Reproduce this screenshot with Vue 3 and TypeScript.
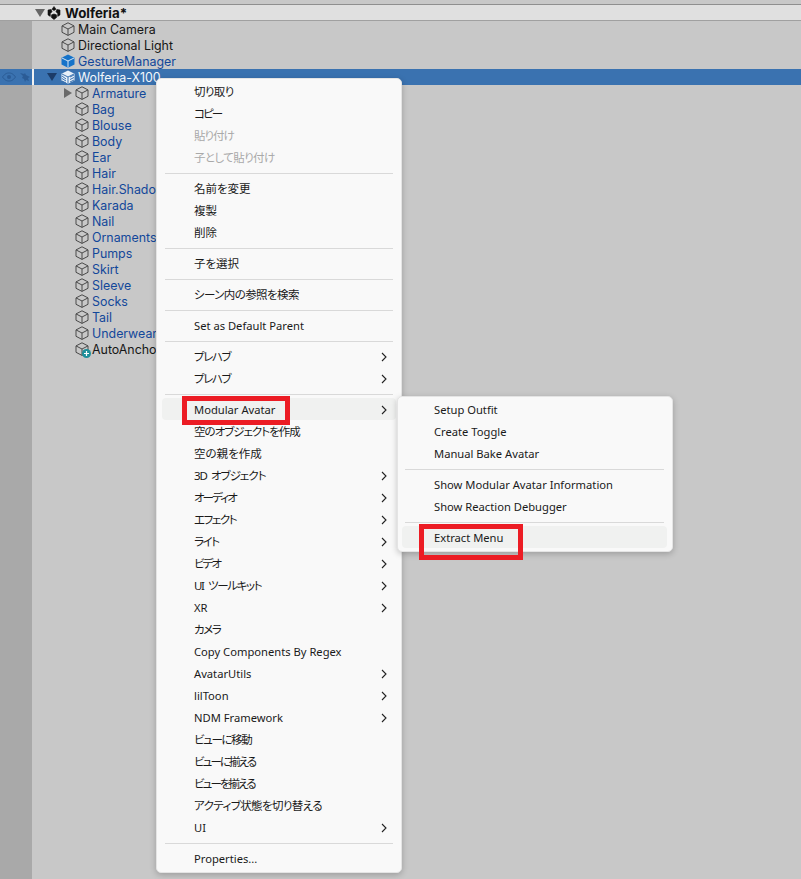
<script setup lang="ts">
interface Row { name: string; depth: number; kind: 'plain' | 'prefab' | 'anchor'; arrow?: 'right' }
interface Item { label?: string; sub?: boolean; off?: boolean; hover?: boolean; sep?: boolean; t?: number }

const topRows: Row[] = [
  { name: 'Main Camera', depth: 0, kind: 'plain' },
  { name: 'Directional Light', depth: 0, kind: 'plain' },
]
const children: Row[] = [
  { name: 'Armature', depth: 1, kind: 'prefab', arrow: 'right' },
  ...['Bag', 'Blouse', 'Body', 'Ear', 'Hair', 'Hair.Shadow', 'Karada', 'Nail', 'Ornaments', 'Pumps', 'Skirt', 'Sleeve', 'Socks', 'Tail', 'Underwear'].map(
    (name): Row => ({ name, depth: 1, kind: 'prefab' }),
  ),
  { name: 'AutoAnchor', depth: 1, kind: 'anchor' },
]

const menu: Item[] = [
  { label: '切り取り', t: 1 }, { label: 'コピー', t: 4 }, { label: '貼り付け', off: true, t: 2 }, { label: '子として貼り付け', off: true, t: 1 },
  { sep: true },
  { label: '名前を変更' }, { label: '複製' }, { label: '削除' },
  { sep: true },
  { label: '子を選択' },
  { sep: true },
  { label: 'シーン内の参照を検索', t: 1 },
  { sep: true },
  { label: 'Set as Default Parent' },
  { sep: true },
  { label: 'プレハブ', sub: true, t: 3 }, { label: 'プレハブ', sub: true, t: 3 },
  { sep: true },
  { label: 'Modular Avatar', sub: true, hover: true },
  { label: '空のオブジェクトを作成', t: 2 }, { label: '空の親を作成' },
  { label: '3D オブジェクト', sub: true, t: 2 }, { label: 'オーディオ', sub: true, t: 4 }, { label: 'エフェクト', sub: true, t: 3 },
  { label: 'ライト', sub: true, t: 3 }, { label: 'ビデオ', sub: true, t: 4 }, { label: 'UI ツールキット', sub: true, t: 3 }, { label: 'XR', sub: true },
  { label: 'カメラ', t: 3 }, { label: 'Copy Components By Regex' },
  { label: 'AvatarUtils', sub: true }, { label: 'lilToon', sub: true }, { label: 'NDM Framework', sub: true },
  { label: 'ビューに移動', t: 3 }, { label: 'ビューに揃える', t: 4 }, { label: 'ビューを揃える', t: 4 }, { label: 'アクティブ状態を切り替える', t: 1 },
  { label: 'UI', sub: true },
  { sep: true },
  { label: 'Properties...' },
]
const submenu: Item[] = [
  { label: 'Setup Outfit' }, { label: 'Create Toggle' }, { label: 'Manual Bake Avatar' },
  { sep: true },
  { label: 'Show Modular Avatar Information' }, { label: 'Show Reaction Debugger' },
  { sep: true },
  { label: 'Extract Menu', hover: true },
]

function itemClass(it: Item): Record<string, boolean> {
  const cjk = /[^\x00-\x7f]/.test(it.label ?? '')
  return {
    off: !!it.off,
    hover: !!it.hover,
    cjk,
    t1: it.t === 1,
    t2: it.t === 2,
    t3: it.t === 3,
    t4: it.t === 4,
  }
}
</script>

<template>
  <div class="page">
    <div class="strip"></div>
    <div class="scene">
      <span class="arrow-slot"><svg width="10" height="8" viewBox="0 0 10 8"><path d="M0 0H10L5 8Z" fill="#666" /></svg></span>
      <svg class="icon" width="14" height="14" viewBox="0 0 14 14">
        <path d="M7 .5 9 3.2 7 4.6 5 3.2ZM1 4l3.2-.6.8 2.3L3.3 7.6 3.3 10.4 1 8.9ZM13 4 9.8 3.4 9 5.7 10.7 7.6 10.7 10.4 13 8.9ZM7 13.5 4.4 11.4 4.6 8.8 7 8 9.4 8.8 9.6 11.4Z" fill="#111" stroke="#111" stroke-width=".6" />
      </svg>
      <span class="scene-name">Wolferia*</span>
    </div>

    <div v-for="r in topRows" :key="r.name" class="row">
      <span class="gutter"></span>
      <span class="arrow-slot first"></span>
      <svg class="icon" width="14" height="14" viewBox="0 0 14 14"><path class="cube" d="M7 .8 13 3.9V10.3L7 13.4 1 10.3V3.9ZM1 3.9 7 7 13 3.9M7 7V13.4" /></svg>
      <span class="name">{{ r.name }}</span>
    </div>

    <div class="row">
      <span class="gutter"></span>
      <span class="arrow-slot first"></span>
      <svg class="icon" width="14" height="14" viewBox="0 0 14 14">
        <path d="M7 .5 13.5 3.8V10.5L7 13.8.5 10.5V3.8Z" fill="#1673c9" />
        <path d="M1 4 7 7 13 4M7 7V13.5" fill="none" stroke="#d8e6f2" stroke-width="1" />
      </svg>
      <span class="name prefab">GestureManager</span>
    </div>

    <div class="row selected">
      <span class="gutter">
        <svg class="vis" width="14" height="10" viewBox="0 0 14 10"><path d="M.5 5C3 1.5 5 1 7 1s4 .5 6.500 4C11 8.500 9 9 7 9S3 8.500.5 5Z" fill="none" stroke="#2b5c96" /><circle cx="7" cy="5" r="2" fill="#2b5c96" /></svg>
        <svg class="vis" width="12" height="11" viewBox="0 0 12 11"><path d="M1 1 5 2 6 1 7 3 11 5 9 6 10 9 7 8 6 10 5 7 3 6 4 4Z" fill="#2b5c96" /></svg>
        <i class="bar"></i>
      </span>
      <span class="arrow-slot second"><svg width="10" height="8" viewBox="0 0 10 8"><path d="M0 0H10L5 8Z" fill="#1c3c68" /></svg></span>
      <svg class="icon" width="14" height="14" viewBox="0 0 14 14">
        <path d="M7 .5 13.500 3.800V10.500L7 13.800.5 10.500V3.800Z" fill="#e8f0f8" />
        <path d="M1 6 5 9M1 8.500 5 11M1 11 5 13M9 7 13 5M9 9.500 13 7.500M9 12 13 10" fill="none" stroke="#3a72b0" stroke-width="1" />
        <path d="M1 4 7 7 13 4M7 7V13.500" fill="none" stroke="#3a72b0" stroke-width="1" />
      </svg>
      <span class="name light">Wolferia-X100</span>
    </div>

    <div v-for="r in children" :key="r.name" class="row">
      <span class="gutter"></span>
      <span class="arrow-slot first"></span>
      <span class="arrow-slot">
        <svg v-if="r.arrow" width="8" height="10" viewBox="0 0 8 10"><path d="M0 0V10L8 5Z" fill="#6a6a6a" /></svg>
      </span>
      <span class="icon-wrap">
        <svg class="icon" width="14" height="14" viewBox="0 0 14 14"><path class="cube" d="M7 .8 13 3.900V10.300L7 13.400 1 10.300V3.900ZM1 3.900 7 7 13 3.900M7 7V13.400" /></svg>
        <svg v-if="r.kind === 'anchor'" class="badge" width="9" height="9" viewBox="0 0 9 9"><circle cx="4.500" cy="4.500" r="4.500" fill="#1d8f9a" /><path d="M4.500 2V7M2 4.500H7" stroke="#fff" stroke-width="1.200" /></svg>
      </span>
      <span class="name" :class="{ prefab: r.kind === 'prefab' }">{{ r.name }}</span>
    </div>

    <div class="filler"><span class="gutter"></span></div>

    <div class="menu main-menu">
      <template v-for="(it, i) in menu" :key="i">
        <div v-if="it.sep" class="sep"></div>
        <div v-else class="item" :class="itemClass(it)">
          <span>{{ it.label }}</span>
          <svg v-if="it.sub" class="chev" width="6" height="10" viewBox="0 0 6 10"><path d="M1 1 5 5 1 9" fill="none" stroke="#222" stroke-width="1.100" /></svg>
        </div>
      </template>
    </div>

    <div class="menu sub-menu">
      <template v-for="(it, i) in submenu" :key="i">
        <div v-if="it.sep" class="sep"></div>
        <div v-else class="item" :class="itemClass(it)"><span>{{ it.label }}</span></div>
      </template>
    </div>

    <div class="mark mark-a"></div>
    <div class="mark mark-b"></div>
  </div>
</template>

<style scoped>
.page {
  position: relative;
  width: 801px;
  height: 879px;
  overflow: hidden;
  display: flex;
  flex-direction: column;
  background: #c8c8c8;
  font-family: Inter, "Noto Sans CJK JP", sans-serif;
  font-size: 12.4px;
  color: #161616;
}
.strip {
  height: 4px;
  background: #c8c8c8;
}
.scene {
  height: 17px;
  box-sizing: border-box;
  display: flex;
  align-items: center;
  padding-left: 33px;
  background: #e0e0e0;
  border-top: 1px solid #8f8f8f;
  border-bottom: 1px solid #a0a0a0;
}
.scene-name {
  margin: 1px 0 0 4px;
  font-size: 13.3px;
  font-weight: 700;
  color: #111;
}
.row {
  height: 16px;
  display: flex;
  align-items: center;
  flex: none;
}
.gutter {
  position: relative;
  width: 32px;
  height: 100%;
  flex: none;
  background: #a9a9a9;
  display: flex;
  align-items: center;
  gap: 3px;
  padding-left: 2px;
  box-sizing: border-box;
}
.selected {
  background: #3a72b0;
}
.selected .gutter {
  background: #3a72b0;
}
.vis {
  flex: none;
}
.bar {
  position: absolute;
  left: 32px;
  top: 0;
  width: 2px;
  height: 16px;
  background: #f2f2f2;
}
.arrow-slot {
  width: 14px;
  height: 14px;
  flex: none;
  display: flex;
  align-items: center;
  justify-content: center;
}
.row .arrow-slot.first {
  width: 29px;
}
.row .arrow-slot.second {
  width: 29px;
  justify-content: flex-end;
  padding-right: 4px;
  box-sizing: border-box;
}
.icon-wrap {
  position: relative;
  width: 14px;
  height: 14px;
  flex: none;
}
.icon {
  display: block;
  flex: none;
}
.badge {
  position: absolute;
  right: -2px;
  bottom: -2px;
}
.cube {
  fill: none;
  stroke: #4a4a4a;
  stroke-width: 1;
}
.name {
  margin: 2px 0 0 3px;
  line-height: 16px;
  white-space: nowrap;
}
.prefab {
  color: #12479a;
}
.light {
  color: #f4f7fb;
}
.filler {
  flex: 1;
  display: flex;
}
.menu {
  position: absolute;
  box-sizing: border-box;
  background: #f9f9f9;
  border: 1px solid #e4e4e4;
  border-radius: 5px;
  box-shadow: 0 2px 6px rgba(0, 0, 0, 0.22);
  font-family: "Noto Sans", "Noto Sans CJK JP", sans-serif;
  font-feature-settings: "palt";
  color: #1a1a1a;
  display: flex;
  flex-direction: column;
}
.main-menu {
  left: 156px;
  top: 78px;
  width: 246px;
  height: 795px;
  padding: 1px 5px 0;
}
.sub-menu {
  left: 397px;
  top: 396px;
  width: 276px;
  height: 156px;
  padding: 1px 5px 0 4px;
}
.item {
  height: 22px;
  flex: none;
  box-sizing: border-box;
  padding: 0 8px 0 32px;
  display: flex;
  align-items: center;
  justify-content: space-between;
  border-radius: 4px;
  font-size: 11.2px;
  white-space: nowrap;
}
.item.cjk {
  font-size: 11.5px;
}
.item.t1 {
  letter-spacing: -0.6px;
}
.item.t2 {
  letter-spacing: -1px;
  word-spacing: 2px;
}
.item.t3 {
  letter-spacing: -1.4px;
  word-spacing: 3px;
}
.item.t4 {
  letter-spacing: -1.9px;
}
.off {
  color: #a9a9a9;
}
.hover {
  background: #f0f1f0;
}
.chev {
  margin: 2px 1px 0 0;
}
.sep {
  height: 1px;
  flex: none;
  margin: 5px 3px 3px;
  background: #d9d9d9;
}
.mark {
  position: absolute;
  box-sizing: border-box;
  border: 5px solid #ec1c24;
}
.mark-a {
  left: 182px;
  top: 396px;
  width: 108px;
  height: 29px;
}
.mark-b {
  left: 419px;
  top: 524px;
  width: 104px;
  height: 36px;
}
</style>
